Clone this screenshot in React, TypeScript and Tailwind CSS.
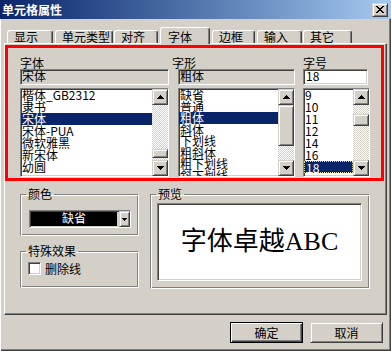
import React from "react";

const sunken =
	"border border-t-[#808080] border-l-[#808080] border-b-white border-r-white shadow-[inset_1px_1px_0_#404040,inset_-1px_-1px_0_#d4d0c8]";
const raised =
	"border border-t-[#d4d0c8] border-l-[#d4d0c8] border-b-[#404040] border-r-[#404040] shadow-[inset_1px_1px_0_#fff,inset_-1px_-1px_0_#808080]";
const etched =
	"border border-t-[#808080] border-l-[#808080] border-b-white border-r-white shadow-[inset_1px_1px_0_#fff,inset_-1px_-1px_0_#808080]";
const dither =
	"bg-[#d4d0c8] bg-[image:repeating-conic-gradient(#fff_0_25%,#d4d0c8_0_50%)] bg-[length:2px_2px]";

const Arrow: React.FC<{ down?: boolean }> = ({ down }) => (
	<div className={`${raised} h-[16px] bg-[#d4d0c8] flex items-center justify-center`}>
		<svg width="7" height="4" viewBox="0 0 7 4" shapeRendering="crispEdges">
			{down ? (
				<path d="M0 0h7v1H0zM1 1h5v1H1zM2 2h3v1H2zM3 3h1v1H3z" fill="#000" />
			) : (
				<path d="M3 0h1v1H3zM2 1h3v1H2zM1 2h5v1H1zM0 3h7v1H0z" fill="#000" />
			)}
		</svg>
	</div>
);

const ScrollBar: React.FC<{ before: string; thumb: string }> = ({ before, thumb }) => (
	<div className="w-[16px] shrink-0 flex flex-col">
		<Arrow />
		<div className={`flex-1 flex flex-col ${dither}`}>
			<div className={before} />
			<div className={`${raised} bg-[#d4d0c8] ${thumb}`} />
		</div>
		<Arrow down />
	</div>
);

const ListBox: React.FC<{
	items: string[];
	selected: number;
	row: string;
	before: string;
	thumb: string;
	focus?: boolean;
}> = ({ items, selected, row, before, thumb, focus }) => (
	<div className={`${sunken} h-[89px] bg-white flex`}>
		<div className="flex-1 min-w-0 overflow-hidden flex flex-col">
			{items.map((it, i) => (
				<div
					key={it}
					className={`${row} shrink-0 pl-[1px] whitespace-nowrap ${
						i === selected ? "bg-[#0a246a] text-white" : ""
					} ${i === selected && focus ? "border border-dotted border-[#d8d8a0]" : ""}`}
				>
					{it}
				</div>
			))}
		</div>
		<ScrollBar before={before} thumb={thumb} />
	</div>
);

const tabs = [
	{ label: "显示", cls: "w-[46px]" },
	{ label: "单元类型", cls: "w-[58px] ml-[2px]" },
	{ label: "对齐", cls: "w-[44px] ml-[1px]" },
	{ label: "字体", cls: "w-[50px] ml-[2px]", active: true },
	{ label: "边框", cls: "w-[43px] ml-[2px]" },
	{ label: "输入", cls: "w-[45px] ml-[2px]" },
	{ label: "其它", cls: "w-[49px] ml-[1px]" },
];

export default function App() {
	return (
		<div className="w-[391px] h-[351px] bg-[#d4d0c8] flex flex-col overflow-hidden text-[12px] text-black font-['Noto_Sans_CJK_SC','Liberation_Sans',sans-serif] shadow-[inset_1px_0_0_#fff,inset_-1px_-1px_0_#404040,inset_-2px_-2px_0_#808080]">
			{/* title bar */}
			<div className="h-[19px] shrink-0 flex items-center justify-between pl-[2px] pr-[3px] bg-linear-to-r from-[#0a246a] to-[#a6caf0] text-white font-bold">
				<span className="leading-[14px]">单元格属性</span>
				<div className={`${raised} w-[16px] h-[14px] bg-[#d4d0c8] flex items-center justify-center`}>
					<svg width="8" height="7" viewBox="0 0 8 7" shapeRendering="crispEdges">
						<path
							d="M0 0h2v1H0zM6 0h2v1H6zM1 1h2v1H1zM5 1h2v1H5zM2 2h4v1H2zM3 3h2v1H3zM2 4h4v1H2zM1 5h2v1H1zM5 5h2v1H5zM0 6h2v1H0zM6 6h2v1H6z"
							fill="#000"
						/>
					</svg>
				</div>
			</div>

			{/* tabs */}
			<div className="flex items-end h-[16px] mt-[8px] pl-[7px] shrink-0">
				{tabs.map((t) => (
					<div
						key={t.label}
						className={`${t.cls} shrink-0 border-t border-l border-r border-t-white border-l-white border-r-[#404040] shadow-[inset_-1px_0_0_#808080] rounded-t-[3px] bg-[#d4d0c8] ${
							t.active
								? "h-[17px] pt-[2px] pl-[7px] leading-[13px] -mb-[1px] relative z-10"
								: "h-[13px] pl-[6px] leading-[12px]"
						}`}
					>
						{t.label}
					</div>
				))}
			</div>

			{/* panel */}
			<div className="ml-[4px] w-[383px] h-[272px] shrink-0 flex flex-col border-t border-l border-r border-b border-t-white border-l-white border-r-[#404040] border-b-[#404040] shadow-[inset_-1px_-1px_0_#808080]">
				{/* font selection area */}
				<div className="mt-[1px] w-[379px] h-[136px] shrink-0 border-[3px] border-[#ff0000] flex pl-[12px] pt-[8px]">
					<div className="w-[149px] flex flex-col">
						<div className="h-[13px] leading-[13px]">字体</div>
						<div className={`${sunken} h-[16px] bg-[#d4d0c8] leading-[12px] pl-[1px]`}>宋体</div>
						<div className="mt-[3px]">
							<ListBox
								items={["楷体_GB2312", "隶书", "宋体", "宋体-PUA", "微软雅黑", "新宋体", "幼圆"]}
								selected={2}
								row="h-[12px] leading-[12px]"
								before="h-[44px]"
								thumb="h-[9px]"
							/>
						</div>
					</div>

					<div className="w-[117px] ml-[9px] flex flex-col">
						<div className="h-[13px] leading-[13px] -ml-[6px]">字形</div>
						<div className={`${sunken} h-[16px] bg-[#d4d0c8] leading-[12px] pl-[1px]`}>粗体</div>
						<div className="mt-[3px]">
							<ListBox
								items={["缺省", "普通", "粗体", "斜体", "下划线", "粗斜体", "粗下划线", "斜下划线"]}
								selected={2}
								row="h-[11.5px] leading-[11.5px]"
								before="h-0"
								thumb="h-[41px]"
							/>
						</div>
					</div>

					<div className="w-[67px] ml-[8px] flex flex-col">
						<div className="h-[13px] leading-[13px]">字号</div>
						<div className={`${sunken} h-[16px] bg-white leading-[12px] pl-[2px] w-[65px]`}>18</div>
						<div className="mt-[3px]">
							<ListBox
								items={["9", "10", "11", "12", "14", "16", "18"]}
								selected={6}
								row="h-[12px] leading-[12px]"
								before="h-[9px]"
								thumb="h-[12px]"
								focus
							/>
						</div>
					</div>
				</div>

				{/* color / effects / preview */}
				<div className="flex mt-[7px] pl-[15px] gap-[11px]">
					<div className="w-[119px] flex flex-col">
						<fieldset className={`${etched} h-[48px]`}>
							<legend className="ml-[5px] px-[2px] leading-[12px]">颜色</legend>
							<div className={`${sunken} mt-[10px] ml-[8px] w-[102px] h-[18px] bg-[#d4d0c8] flex`}>
								<div className="flex-1 ml-[1px] my-[1px] bg-black text-white leading-[12px] text-center">
									缺省
								</div>
								<div className={`${raised} w-[11px] ml-[2px] bg-[#d4d0c8] flex items-center justify-center`}>
									<svg width="5" height="3" viewBox="0 0 5 3" shapeRendering="crispEdges">
										<path d="M0 0h5v1H0zM1 1h3v1H1zM2 2h1v1H2z" fill="#000" />
									</svg>
								</div>
							</div>
						</fieldset>

						<fieldset className={`${etched} h-[43px] mt-[9px]`}>
							<legend className="ml-[5px] px-[2px] leading-[12px]">特殊效果</legend>
							<div className="flex items-center mt-[5px] ml-[7px]">
								<div className={`${sunken} w-[13px] h-[13px] bg-white`} />
								<span className="ml-[4px] leading-[13px]">删除线</span>
							</div>
						</fieldset>
					</div>

					<fieldset className={`${etched} w-[220px] h-[101px]`}>
						<legend className="ml-[5px] px-[2px] leading-[12px]">预览</legend>
						<div
							className={`${sunken} ml-[6px] mt-[3px] w-[205px] h-[78px] bg-white flex items-center justify-center text-[26px] leading-[30px] font-['Liberation_Serif','Noto_Sans_CJK_SC',serif]`}
						>
							字体卓越ABC
						</div>
					</fieldset>
				</div>
			</div>

			{/* buttons */}
			<div className="flex justify-end gap-[7px] mt-[7px] pr-[8px] shrink-0">
				<button className="w-[73px] h-[21px] bg-[#d4d0c8] border border-black shadow-[inset_1px_1px_0_#fff,inset_-1px_-1px_0_#404040,inset_-2px_-2px_0_#808080] leading-[12px]">
					确定
				</button>
				<button className={`${raised} w-[73px] h-[21px] bg-[#d4d0c8] leading-[12px]`}>取消</button>
			</div>
		</div>
	);
}
